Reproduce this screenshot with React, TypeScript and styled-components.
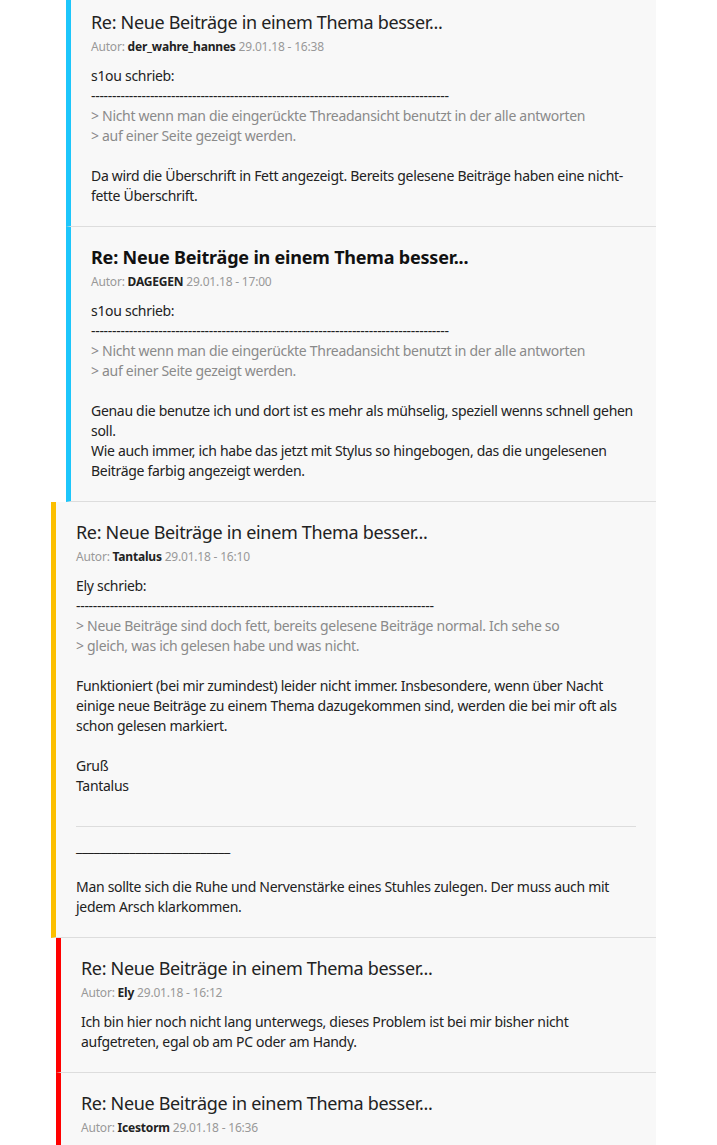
import React from "react";
import styled, { createGlobalStyle } from "styled-components";

const GlobalStyle = createGlobalStyle`
  html, body { margin: 0; padding: 0; background: #ffffff; }
  body { font-family: "Noto Sans", "Open Sans", sans-serif; color: #222; }
`;

const Thread = styled.div`
  display: flex;
  flex-direction: column;
  margin-top: -8px;
  width: 656px;
`;

const Post = styled.article<{ $indent: number; $accent: string }>`
  margin-left: ${(p) => p.$indent}px;
  background: #f8f8f8;
  border-left: 5px solid ${(p) => p.$accent};
  border-bottom: 1px solid #dddddd;
  padding: 18px 20px 20px 20px;
`;

const Title = styled.h2<{ $bold?: boolean }>`
  margin: 0;
  font-size: 18px;
  line-height: 24px;
  font-weight: ${(p) => (p.$bold ? 700 : 400)};
  letter-spacing: ${(p) => (p.$bold ? "-0.2px" : "-0.33px")};
  color: ${(p) => (p.$bold ? "#111" : "#222")};
`;

const Meta = styled.div`
  margin-top: 5px;
  font-size: 12px;
  line-height: 16px;
  letter-spacing: -0.2px;
  color: #999;
`;

const Author = styled.b`
  color: #222;
  font-weight: 700;
`;

const Body = styled.div`
  margin-top: 11px;
  font-size: 14px;
  line-height: 20px;
  letter-spacing: -0.3px;
  color: #222;
`;

const Line = styled.div`
  min-height: 20px;
`;

const Quote = styled.div`
  color: #8a8a8a;
`;

const Signature = styled.div`
  margin-top: 30px;
  border-top: 1px solid #dddddd;
  padding-top: 10px;
`;

const dashes = "-".repeat(85);

type Data = {
  indent: number;
  accent: string;
  bold?: boolean;
  author: string;
  date: string;
  content: React.ReactNode;
};

const CYAN = "#1dc6fb";
const YELLOW = "#fcbf00";
const RED = "#ff0000";

const posts: Data[] = [
  {
    indent: 66,
    accent: CYAN,
    author: "der_wahre_hannes",
    date: "29.01.18 - 16:38",
    content: (
      <>
        <Line>s1ou schrieb:</Line>
        <Line>{dashes}</Line>
        <Quote>
          <Line>&gt; Nicht wenn man die eingerückte Threadansicht benutzt in der alle antworten</Line>
          <Line>&gt; auf einer Seite gezeigt werden.</Line>
        </Quote>
        <Line />
        <Line>
          Da wird die Überschrift in Fett angezeigt. Bereits gelesene Beiträge haben eine nicht-fette
          Überschrift.
        </Line>
      </>
    ),
  },
  {
    indent: 66,
    accent: CYAN,
    bold: true,
    author: "DAGEGEN",
    date: "29.01.18 - 17:00",
    content: (
      <>
        <Line>s1ou schrieb:</Line>
        <Line>{dashes}</Line>
        <Quote>
          <Line>&gt; Nicht wenn man die eingerückte Threadansicht benutzt in der alle antworten</Line>
          <Line>&gt; auf einer Seite gezeigt werden.</Line>
        </Quote>
        <Line />
        <Line>
          Genau die benutze ich und dort ist es mehr als mühselig, speziell wenns schnell gehen soll.
        </Line>
        <Line>
          Wie auch immer, ich habe das jetzt mit Stylus so hingebogen, das die ungelesenen Beiträge
          farbig angezeigt werden.
        </Line>
      </>
    ),
  },
  {
    indent: 51,
    accent: YELLOW,
    author: "Tantalus",
    date: "29.01.18 - 16:10",
    content: (
      <>
        <Line>Ely schrieb:</Line>
        <Line>{dashes}</Line>
        <Quote>
          <Line>&gt; Neue Beiträge sind doch fett, bereits gelesene Beiträge normal. Ich sehe so</Line>
          <Line>&gt; gleich, was ich gelesen habe und was nicht.</Line>
        </Quote>
        <Line />
        <Line>
          Funktioniert (bei mir zumindest) leider nicht immer. Insbesondere, wenn über Nacht einige
          neue Beiträge zu einem Thema dazugekommen sind, werden die bei mir oft als schon gelesen
          markiert.
        </Line>
        <Line />
        <Line>Gruß</Line>
        <Line>Tantalus</Line>
        <Signature>
          <Line>{"_".repeat(26)}</Line>
          <Line />
          <Line>
            Man sollte sich die Ruhe und Nervenstärke eines Stuhles zulegen. Der muss auch mit jedem
            Arsch klarkommen.
          </Line>
        </Signature>
      </>
    ),
  },
  {
    indent: 56,
    accent: RED,
    author: "Ely",
    date: "29.01.18 - 16:12",
    content: (
      <Line>
        Ich bin hier noch nicht lang unterwegs, dieses Problem ist bei mir bisher nicht aufgetreten,
        egal ob am PC oder am Handy.
      </Line>
    ),
  },
  {
    indent: 56,
    accent: RED,
    author: "Icestorm",
    date: "29.01.18 - 16:36",
    content: (
      <Line>
        Bei mir werden die neuen Beiträge auch fett angezeigt, allerdings nicht immer zuverlässig.
      </Line>
    ),
  },
];

export default function App() {
  return (
    <>
      <GlobalStyle />
      <Thread>
        {posts.map((p, i) => (
          <Post key={i} $indent={p.indent} $accent={p.accent}>
            <Title $bold={p.bold}>Re: Neue Beiträge in einem Thema besser...</Title>
            <Meta>
              Autor: <Author>{p.author}</Author> {p.date}
            </Meta>
            <Body>{p.content}</Body>
          </Post>
        ))}
      </Thread>
    </>
  );
}
